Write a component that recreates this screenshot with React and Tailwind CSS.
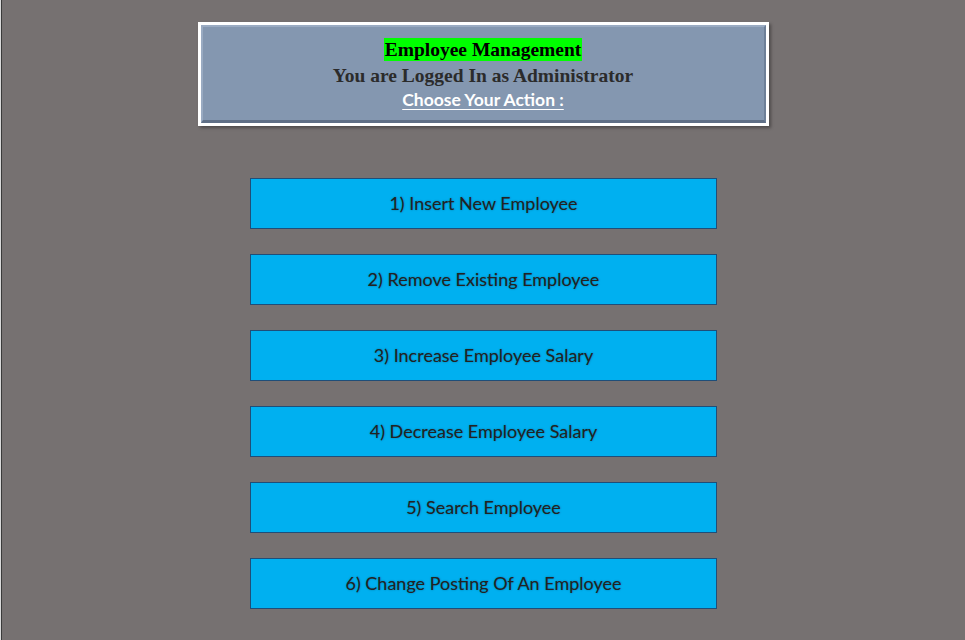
import React from 'react';

const actions = [
  '1) Insert New Employee',
  '2) Remove Existing Employee',
  '3) Increase Employee Salary',
  '4) Decrease Employee Salary',
  '5) Search Employee',
  '6) Change Posting Of An Employee',
];

export default function App() {
  return (
    <div className="h-[640px] w-[965px] overflow-hidden border-l border-[#d9d9d9] bg-[#767171]">
      <div className="flex h-full flex-col items-center border-l border-[#3a3a3a]">
        {/* Header panel */}
        <div className="mt-[22px] ml-[-1px] h-[104px] w-[571px] border-[3px] border-white bg-[#8497b0] shadow-[2px_2px_3px_rgba(0,0,0,0.35)]">
          <div className="flex h-full flex-col items-center border-t-2 border-l-2 border-t-[#9aabc2] border-l-[#9aabc2] border-r-2 border-b-[3px] border-r-[#6d7f97] border-b-[#5f6f86] pt-[11px]">
            <span className="bg-[#00ff00] px-[1px] text-[19.5px] font-bold leading-[23px] text-black [font-family:'Liberation_Serif',serif]">
              Employee Management
            </span>
            <span className="mt-[2px] text-[19.5px] font-bold leading-[25px] text-[#2b2b2b] [font-family:'Liberation_Serif',serif]">
              You are Logged In as Administrator
            </span>
            <span className="mt-[1px] text-[17.5px] font-bold leading-[22px] text-white underline decoration-1 underline-offset-[3px] [font-family:'Lato',sans-serif]">
              Choose Your Action :
            </span>
          </div>
        </div>

        {/* Action buttons */}
        <div className="mt-[52px] flex flex-col gap-[25px]">
          {actions.map((label) => (
            <button
              key={label}
              className="flex h-[51px] w-[467px] items-center justify-center border-[1.5px] border-[#1f4e79] bg-[#00b0f0] text-[18px] text-[#222] [font-family:'Lato',sans-serif] [text-shadow:0_0_2px_rgba(0,0,0,0.35)]"
            >
              {label}
            </button>
          ))}
        </div>
      </div>
    </div>
  );
}
